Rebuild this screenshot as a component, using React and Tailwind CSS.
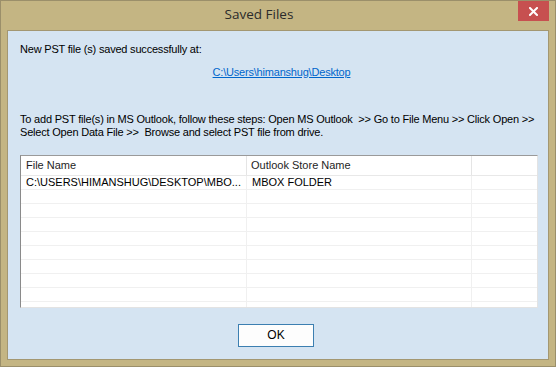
import React from "react";

const font = { fontFamily: '"Liberation Sans", Arial, sans-serif' };

export default function App() {
  const rows = Array.from({ length: 10 });
  return (
    <div
      className="w-[556px] h-[367px] bg-[#c4b583] border border-[#9b8f6a] flex flex-col overflow-hidden"
      style={font}
    >
      <div className="h-[29px] relative flex items-center justify-center shrink-0 pr-[38px]">
        <span
          className="text-[13.5px] text-[#2b2b2b] leading-none pb-[1px]"
          style={{ fontFamily: '"Open Sans", "Noto Sans", sans-serif' }}
        >
          Saved Files
        </span>
        <div className="absolute right-[6px] top-0 w-[31px] h-[20px] bg-[#c75050] flex items-center justify-center">
          <svg width="9" height="9" viewBox="0 0 9 9">
            <path d="M1 1 L8 8 M8 1 L1 8" stroke="#fff" strokeWidth="2" strokeLinecap="square" />
          </svg>
        </div>
      </div>
      <div className="mx-[6px] h-[330px] border border-[#a39772] bg-[#d5e4f2] flex flex-col text-[11px] leading-[13px] text-black shrink-0">
        <div className="mt-[12px] pl-[12px] tracking-[-0.2px]">New PST file (s) saved successfully at:</div>
        <div className="mt-[10px] flex justify-center">
          <span className="text-[#0066cc] underline ml-[7px] tracking-[-0.2px]">C:\Users\himanshug\Desktop</span>
        </div>
        <div className="mt-[34px] pl-[12px] whitespace-pre tracking-[-0.2px]">
          {"To add PST file(s) in MS Outlook, follow these steps: Open MS Outlook  >> Go to File Menu >> Click Open >>\nSelect Open Data File >>  Browse and select PST file from drive."}
        </div>
        <div className="mt-[16px] ml-[12px] w-[518px] h-[153px] bg-white border-t border-l border-t-[#9a9a9a] border-l-[#8a8a8a] border-r border-b border-r-[#e3e3e3] border-b-[#e3e3e3] overflow-hidden flex flex-col">
          <div className="h-[20px] shrink-0 flex border-b border-[#e8e8e8]">
            <div className="w-[226px] border-r border-[#e5e5e5] pl-[5px] flex items-center text-[#1e1e1e]">File Name</div>
            <div className="w-[225px] border-r border-[#e5e5e5] pl-[4px] flex items-center text-[#1e1e1e]">Outlook Store Name</div>
            <div className="flex-1" />
          </div>
          {rows.map((_, i) => (
            <div key={i} className="h-[14px] shrink-0 flex border-b border-[#f0f0f0]">
              <div className="w-[226px] border-r border-[#f0f0f0] pl-[5px] flex items-center whitespace-nowrap overflow-hidden">
                {i === 0 ? "C:\\USERS\\HIMANSHUG\\DESKTOP\\MBO..." : ""}
              </div>
              <div className="w-[225px] border-r border-[#f0f0f0] pl-[5px] flex items-center whitespace-nowrap">
                {i === 0 ? "MBOX FOLDER" : ""}
              </div>
              <div className="flex-1" />
            </div>
          ))}
        </div>
        <div className="mt-[16px] flex">
          <button className="ml-[230px] w-[76px] h-[23px] border border-[#3c7fb1] bg-[#fdfdfd] text-[12px] text-black flex items-center justify-center">
            OK
          </button>
        </div>
      </div>
    </div>
  );
}
